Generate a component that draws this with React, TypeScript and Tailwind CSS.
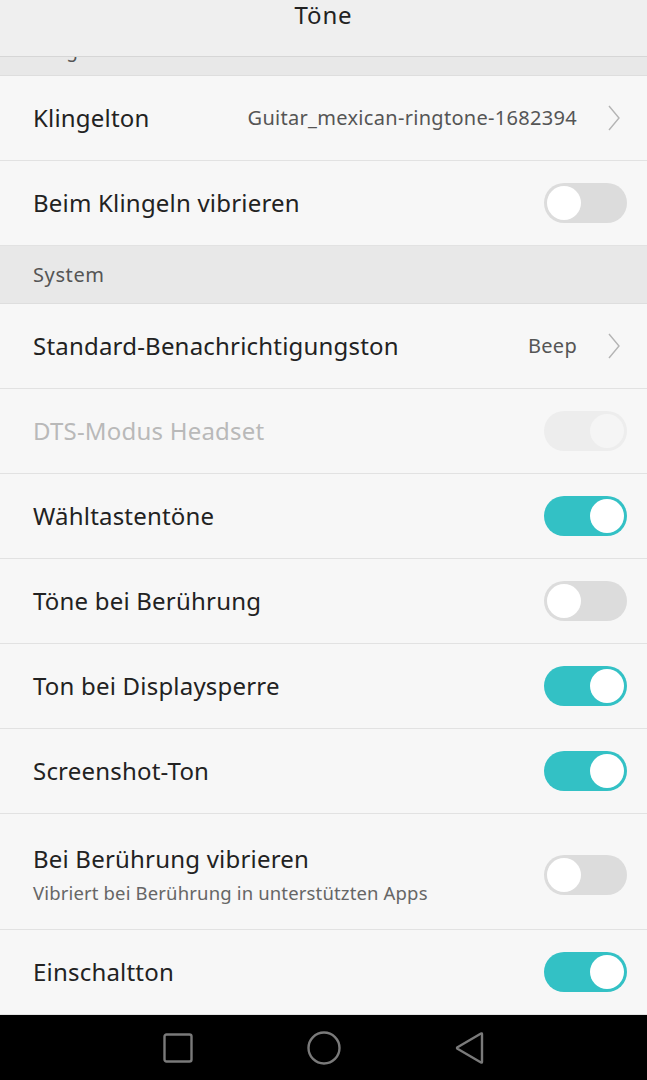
import React from 'react';

type Row =
  | { kind: 'link'; title: string; value: string }
  | { kind: 'toggle'; title: string; on: boolean; disabled?: boolean; subtitle?: string };

const font = { fontFamily: '"Noto Sans", Roboto, sans-serif' };

function Toggle({ on, disabled }: { on: boolean; disabled?: boolean }) {
  if (disabled) {
    return (
      <div className="w-[83px] h-[40px] rounded-full bg-[#ededed] flex items-center justify-end px-[3px]">
        <div className="w-[34px] h-[34px] rounded-full bg-[#f5f5f5]" />
      </div>
    );
  }
  return (
    <div
      className={`w-[83px] h-[40px] rounded-full flex items-center px-[3px] ${
        on ? 'bg-[#33c1c5] justify-end' : 'bg-[#dcdcdc] justify-start'
      }`}
    >
      <div className="w-[34px] h-[34px] rounded-full bg-white" />
    </div>
  );
}

function Chevron() {
  return (
    <svg width="14" height="26" viewBox="0 0 14 26" className="ml-[30px] mr-[6px]">
      <path d="M2 1 L12 13 L2 25" fill="none" stroke="#b4b4b4" strokeWidth="1.4" />
    </svg>
  );
}

function SettingRow({ row }: { row: Row }) {
  if (row.kind === 'link') {
    return (
      <div className="h-[85px] border-b border-[#e2e2e2] flex items-center pl-[33px] pr-[20px] bg-[#f7f7f7]">
        <span className="text-[24px] tracking-[0.2px] leading-none text-[#222]">{row.title}</span>
        <span className="ml-auto text-[20px] tracking-[0.3px] leading-none text-[#555]">{row.value}</span>
        <Chevron />
      </div>
    );
  }
  return (
    <div
      className={`${row.subtitle ? 'h-[116px] pt-[6px]' : 'h-[85px]'} border-b border-[#e2e2e2] flex items-center pl-[33px] pr-[20px] bg-[#f7f7f7]`}
    >
      <div className="flex flex-col">
        <span className={`text-[24px] tracking-[0.2px] leading-none ${row.disabled ? 'text-[#b9b9b9]' : 'text-[#222]'}`}>
          {row.title}
        </span>
        {row.subtitle && (
          <span className="text-[18.5px] tracking-[0.15px] leading-none text-[#666] mt-[13px]">{row.subtitle}</span>
        )}
      </div>
      <div className="ml-auto">
        <Toggle on={row.on} disabled={row.disabled} />
      </div>
    </div>
  );
}

const topRows: Row[] = [
  { kind: 'link', title: 'Klingelton', value: 'Guitar_mexican-ringtone-1682394' },
  { kind: 'toggle', title: 'Beim Klingeln vibrieren', on: false },
];

const systemRows: Row[] = [
  { kind: 'link', title: 'Standard-Benachrichtigungston', value: 'Beep' },
  { kind: 'toggle', title: 'DTS-Modus Headset', on: true, disabled: true },
  { kind: 'toggle', title: 'Wähltastentöne', on: true },
  { kind: 'toggle', title: 'Töne bei Berührung', on: false },
  { kind: 'toggle', title: 'Ton bei Displaysperre', on: true },
  { kind: 'toggle', title: 'Screenshot-Ton', on: true },
  { kind: 'toggle', title: 'Bei Berührung vibrieren', on: false, subtitle: 'Vibriert bei Berührung in unterstützten Apps' },
  { kind: 'toggle', title: 'Einschaltton', on: true },
];

export default function App() {
  return (
    <div className="w-[647px] h-[1080px] flex flex-col bg-[#f7f7f7] overflow-hidden" style={font}>
      {/* HEADER */}
      <div className="h-[57px] bg-[#efefef] border-b border-[#d6d6d6] flex justify-center items-start shrink-0">
        <span className="text-[24px] tracking-[0.8px] text-[#222] leading-[30px]">Töne</span>
      </div>

      {/* scrolled-off section header */}
      <div className="h-[19px] bg-[#e8e8e8] border-b border-[#dedede] overflow-hidden pl-[33px] shrink-0">
        <div className="text-[19px] leading-[19px] text-[#555] -mt-[16px]">Klingeln</div>
      </div>

      {topRows.map(r => (
        <SettingRow key={r.title} row={r} />
      ))}

      <div className="h-[58px] bg-[#e8e8e8] border-b border-[#dedede] flex items-center pl-[33px] shrink-0">
        <span className="text-[20px] tracking-[0.6px] leading-none text-[#555]">System</span>
      </div>

      {systemRows.map(r => (
        <SettingRow key={r.title} row={r} />
      ))}

      {/* NAV BAR */}
      <div className="flex-1 bg-black flex items-center justify-center gap-[114px]">
        <svg width="30" height="30" viewBox="0 0 30 30">
          <rect x="1.5" y="1.5" width="27" height="27" rx="2" fill="none" stroke="#7a7a7a" strokeWidth="2.4" />
        </svg>
        <svg width="34" height="34" viewBox="0 0 34 34">
          <circle cx="17" cy="17" r="15.5" fill="none" stroke="#7a7a7a" strokeWidth="2.4" />
        </svg>
        <svg width="30" height="32" viewBox="0 0 30 32">
          <path d="M27 2 L27 30 Q27 31 26 30.5 L2.5 16.8 Q1.5 16 2.5 15.2 L26 1.5 Q27 1 27 2 Z" fill="none" stroke="#7a7a7a" strokeWidth="2.4" strokeLinejoin="round" />
        </svg>
      </div>
    </div>
  );
}
